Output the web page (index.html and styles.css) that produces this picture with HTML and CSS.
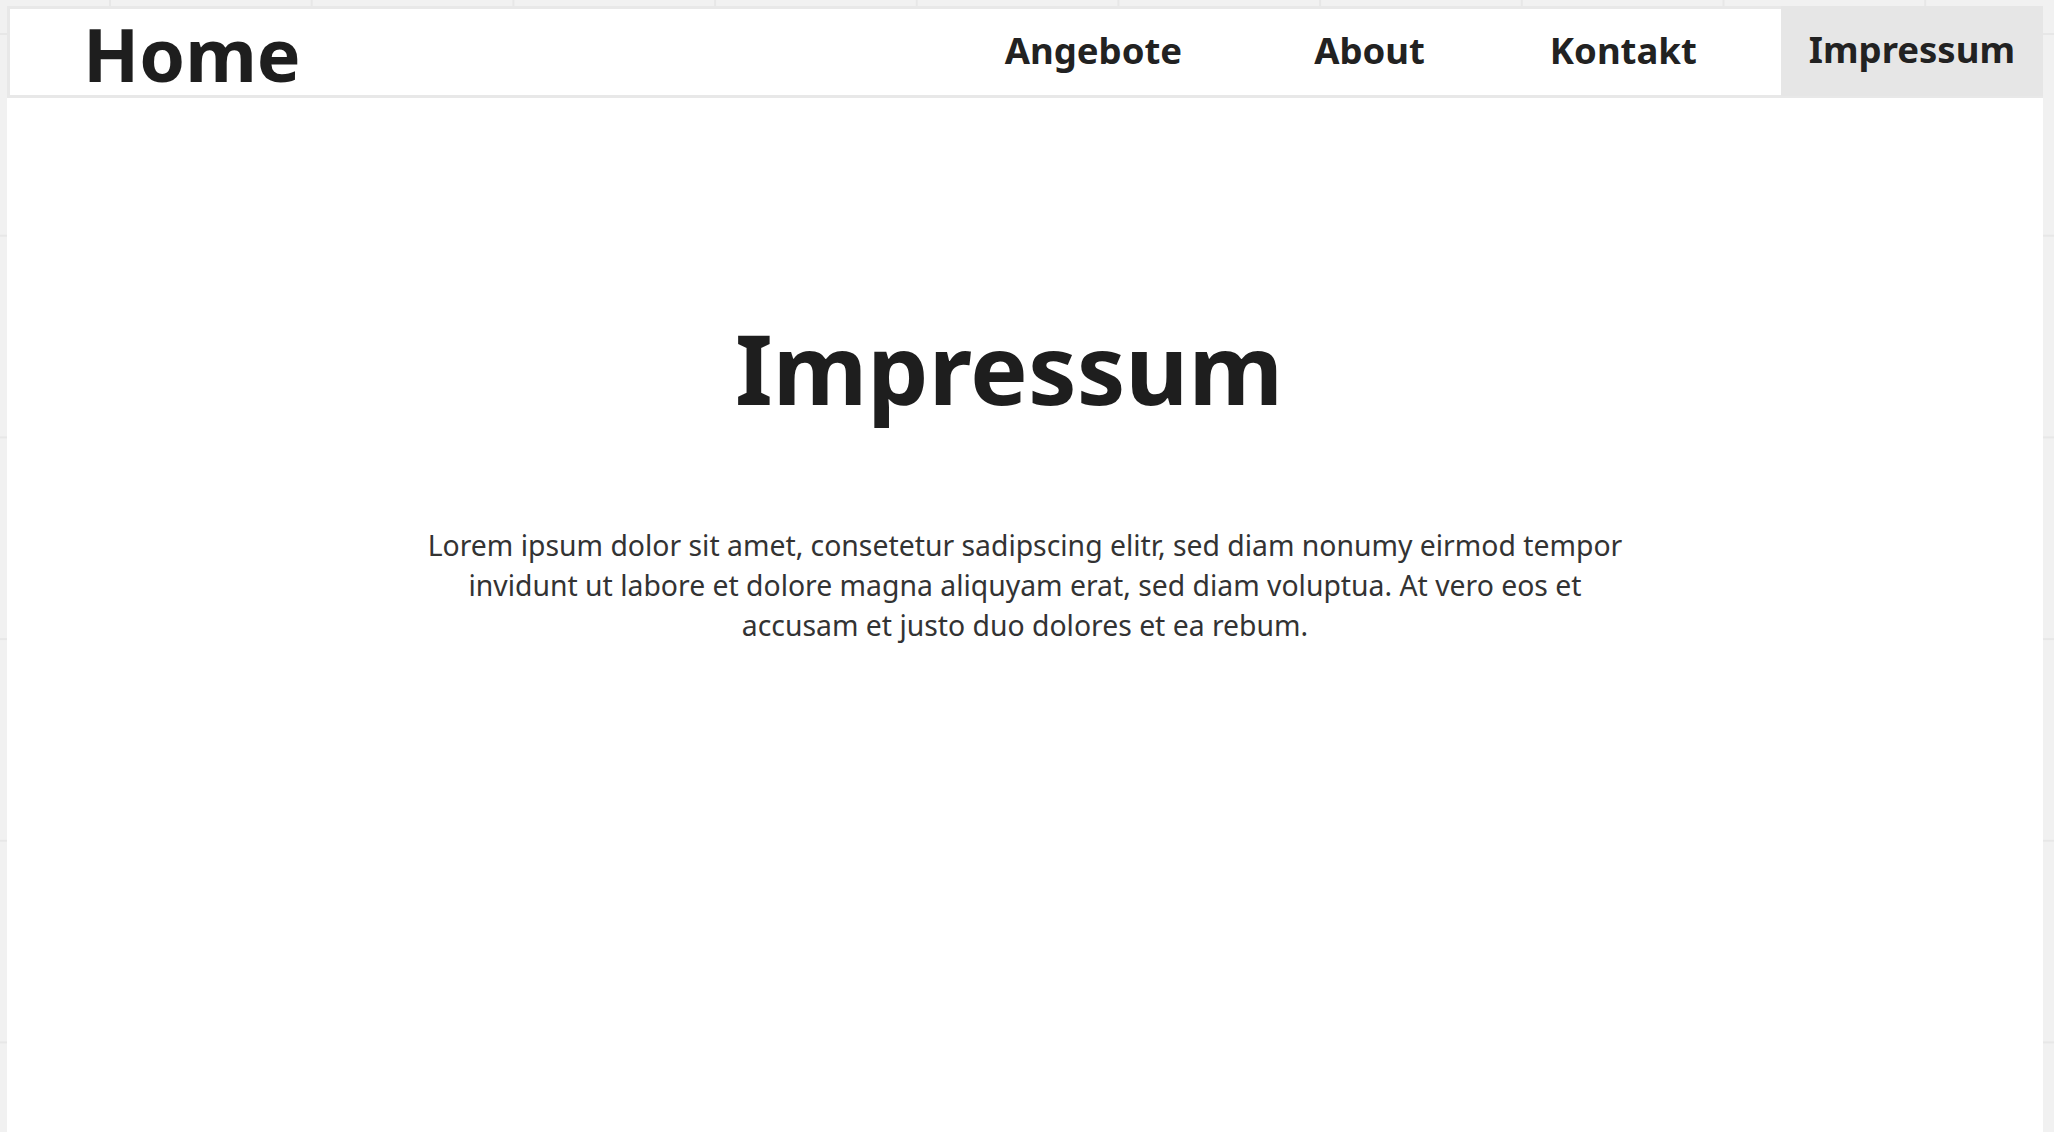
FILE: index.html
```html
<!DOCTYPE html>
<html lang="de">
<head>
<meta charset="utf-8">
<title>Impressum</title>
<link rel="stylesheet" href="styles.css">
</head>
<body>
<div class="page">
  <header class="topbar">
    <a class="brand" href="#">Home</a>
    <nav class="nav">
      <a class="nav-link" href="#">Angebote</a>
      <a class="nav-link nav-about" href="#">About</a>
      <a class="nav-link nav-kontakt" href="#">Kontakt</a>
      <a class="nav-link nav-impressum is-active" href="#">Impressum</a>
    </nav>
  </header>
  <main class="content">
    <h1 class="title">Impressum</h1>
    <p class="text">Lorem ipsum dolor sit amet, consetetur sadipscing elitr, sed diam nonumy eirmod tempor invidunt ut labore et dolore magna aliquyam erat, sed diam voluptua. At vero eos et accusam et justo duo dolores et ea rebum.</p>
  </main>
</div>
</body>
</html>
```

FILE: styles.css
```css
html, body {
  margin: 0;
  height: 100%;
}

body {
  font-family: "Noto Sans", "Open Sans", "DejaVu Sans", sans-serif;
  background-color: #f1f1f1;
  background-image:
    linear-gradient(to right, #e7e7e7 2px, transparent 2px),
    linear-gradient(to bottom, #e7e7e7 2px, transparent 2px);
  background-size: 201.7px 201.7px;
  background-position: 109px 33px;
  overflow: hidden;
}

.page {
  display: flex;
  flex-direction: column;
  height: 100%;
  box-sizing: border-box;
  padding: 6px 11px 0 7px;
}

.topbar {
  display: flex;
  align-items: stretch;
  justify-content: space-between;
  height: 86px;
  background: #ffffff;
  border: 3px solid #e8e8e8;
}

.brand {
  display: flex;
  align-items: center;
  padding-left: 73px;
  padding-top: 2px;
  font-size: 73.5px;
  font-weight: 700;
  color: #1e1e1e;
  text-decoration: none;
}

.nav {
  display: flex;
  align-items: stretch;
}

.nav-link {
  display: flex;
  align-items: center;
  padding: 0 30px 4px 28px;
  font-size: 36.5px;
  font-weight: 700;
  color: #222222;
  text-decoration: none;
}

.nav-about {
  margin-left: 74px;
}

.nav-kontakt {
  margin-left: 67px;
}

.nav-impressum {
  margin-left: 54px;
}

.nav-link.is-active {
  background: #e6e6e6;
  margin-top: -3px;
  margin-right: -3px;
  margin-bottom: -1px;
  padding-right: 28px;
}

.content {
  flex: 1;
  background: #ffffff;
  display: flex;
  flex-direction: column;
  align-items: center;
}

.title {
  margin: 211px 32px 0 0;
  font-size: 97px;
  line-height: 1.2;
  font-weight: 700;
  color: #1e1e1e;
}

.text {
  margin: 100px 0 0;
  max-width: 1216px;
  font-size: 28.35px;
  line-height: 40px;
  color: #333333;
  text-align: center;
}
```
